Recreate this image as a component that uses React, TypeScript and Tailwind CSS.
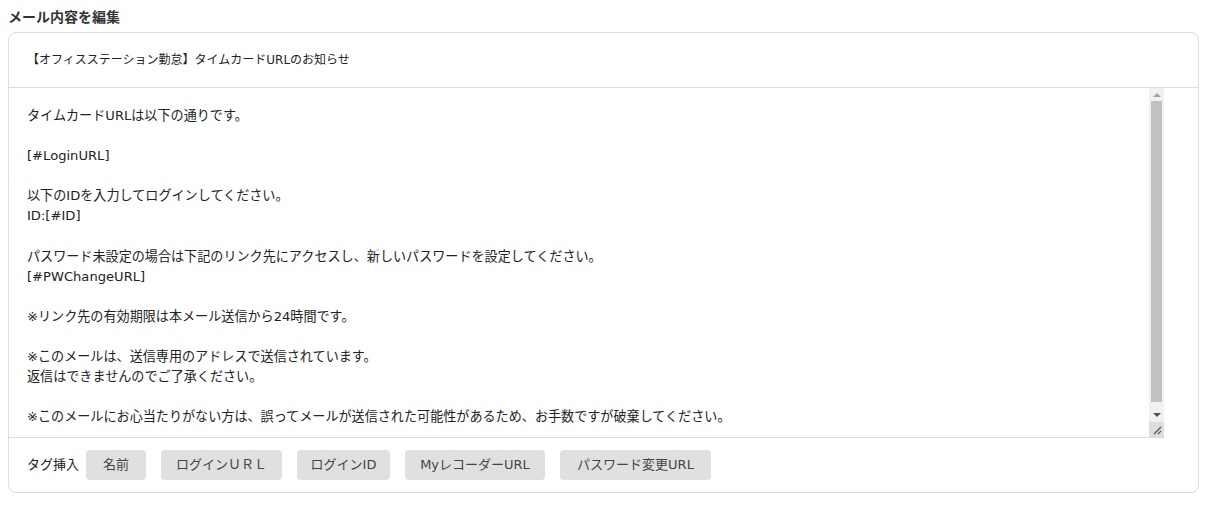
const body = `タイムカードURLは以下の通りです。

[#LoginURL]

以下のIDを入力してログインしてください。
ID:[#ID]

パスワード未設定の場合は下記のリンク先にアクセスし、新しいパスワードを設定してください。
[#PWChangeURL]

※リンク先の有効期限は本メール送信から24時間です。

※このメールは、送信専用のアドレスで送信されています。
返信はできませんのでご了承ください。

※このメールにお心当たりがない方は、誤ってメールが送信された可能性があるため、お手数ですが破棄してください。
`;

const tags = [
  { label: "名前", w: "w-[60px]" },
  { label: "ログインＵＲＬ", w: "w-[121px]" },
  { label: "ログインID", w: "w-[93px]" },
  { label: "MyレコーダーURL", w: "w-[140px]" },
  { label: "パスワード変更URL", w: "w-[151px]" },
];

const App = () => {
  return (
    <div className="px-2 pt-[6px] text-[#333] font-['Noto_Sans_CJK_JP',sans-serif]">
      <h2 className="text-[14px] font-bold leading-[20px] mb-[6px]">メール内容を編集</h2>

      <div className="border border-[#dcdcdc] rounded-[8px] w-[1191px]">
        {/* Subject */}
        <div className="h-[55px] flex items-center px-[18px] border-b border-[#dcdcdc] text-[12px] text-[#222] font-['DejaVu_Sans','Noto_Sans_CJK_JP',sans-serif]">
          【オフィスステーション勤怠】タイムカードURLのお知らせ
        </div>

        {/* Body */}
        <div className="relative w-[1155px]">
          <textarea
            defaultValue={body}
            className="block w-full h-[350px] pl-[18px] pr-6 pt-[18px] pb-6 text-[13.1px] leading-[20.1px] border-b border-[#dcdcdc] outline-none resize-none overflow-hidden text-[#222] font-['DejaVu_Sans','Noto_Sans_CJK_JP',sans-serif]"
          />
          {/* scrollbar */}
          <div className="absolute right-0 top-0 bottom-[1px] w-[15px] flex flex-col bg-[#f1f1f1]">
            <div className="h-[13px] flex items-center justify-center">
              <div className="w-0 h-0 border-x-[4px] border-x-transparent border-b-[4px] border-b-[#a3a3a3]" />
            </div>
            <div className="flex-1 px-[2px] pb-[6px]">
              <div className="h-full bg-[#c1c1c1]" />
            </div>
            <div className="h-[14px] flex items-center justify-center">
              <div className="w-0 h-0 border-x-[4px] border-x-transparent border-t-[4px] border-t-[#505050]" />
            </div>
            <div className="h-[15px] bg-[#dcdcdc] flex items-center justify-center">
              <svg width="11" height="11" viewBox="0 0 11 11">
                <path d="M10 3 L3 10 M10 7 L7 10" stroke="#555" strokeWidth="1.2" fill="none" />
              </svg>
            </div>
          </div>
        </div>

        {/* Tag insert */}
        <div className="flex items-center gap-[15px] pl-[18px] h-[54px] font-['DejaVu_Sans','Noto_Sans_CJK_JP',sans-serif]">
          <span className="text-[13px] text-[#222] -mr-[8px]">タグ挿入</span>
          {tags.map((tag) => (
            <button
              key={tag.label}
              className={`${tag.w} h-[30px] rounded-[4px] bg-[#e0e0e0] text-[13px] text-[#444] flex items-center justify-center`}
            >
              {tag.label}
            </button>
          ))}
        </div>
      </div>
    </div>
  );
};

export default App;
